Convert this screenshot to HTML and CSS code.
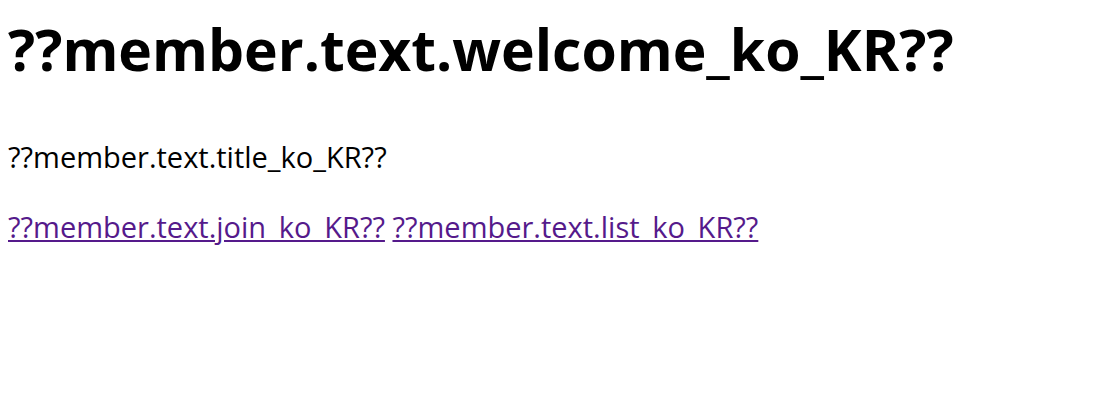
FILE: index.html
```html
<!DOCTYPE html>
<html>
<head>
<meta charset="utf-8">
<link rel="stylesheet" href="styles.css">
</head>
<body class="page">
<h1 class="welcome">??member.text.welcome_ko_KR??</h1>
<p class="title">??member.text.title_ko_KR??</p>
<p class="links"><a class="link" href="#">??member.text.join_ko_KR??</a> <a class="link" href="#">??member.text.list_ko_KR??</a></p>
</body>
</html>
```
FILE: styles.css
```css
.page {
  margin: 0;
  padding: 0 8px;
  font-family: "Open Sans", "Noto Sans CJK KR", sans-serif;
  font-size: 29px;
  color: #000;
  background: #fff;
}
.welcome {
  font-size: 57px;
  font-weight: bold;
  margin: 10px 0 49px;
}
.title {
  margin: 0 0 31px;
}
.links {
  margin: 0;
}
.link {
  color: #551a8b;
}
```
